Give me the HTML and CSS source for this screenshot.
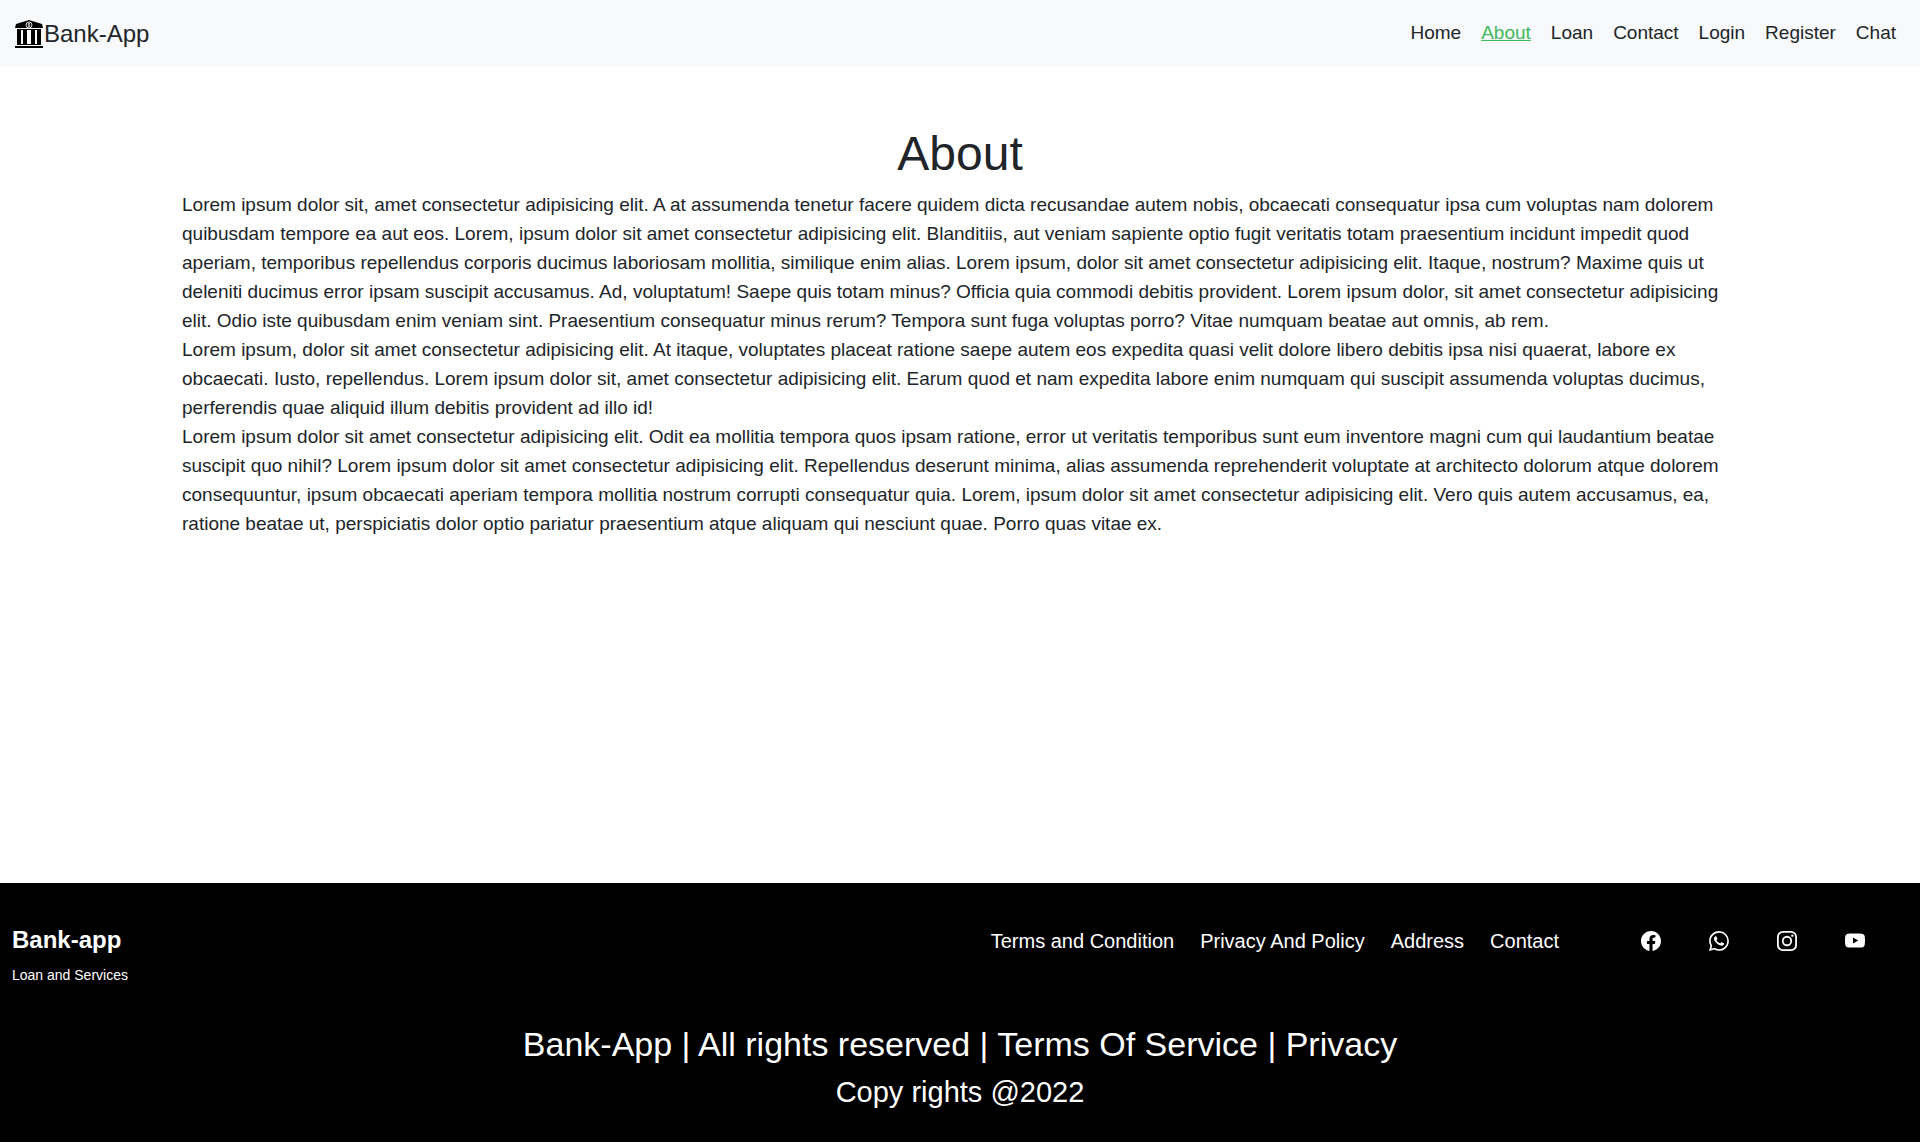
FILE: index.html
```html
<!DOCTYPE html>
<html lang="en">
<head>
<meta charset="utf-8">
<meta name="viewport" content="width=device-width, initial-scale=1">
<title>Bank-App</title>
<link rel="stylesheet" href="styles.css">
</head>
<body>
<header class="navbar">
  <a class="brand" href="#">
    <svg class="brand-icon" viewBox="0 0 28 28" aria-hidden="true">
      <path d="M14 0 27 4 28 8H0L1 4Z"/>
      <path d="M2 9h24v1H2zM2 24h24v1H2zM0 26h28v2H0z"/>
      <path d="M2 10h4v15H2zM8 10h4v15H8zM16 10h4v15h-4zM22 10h4v15h-4z"/>
      <circle cx="14" cy="5" r="3" fill="#111" stroke="#ddd"/>
      <path d="M15 3.700c-2-.8-2.600.9-1 1.300s1 2-1 1.300M14 3v4" fill="none" stroke="#ddd" stroke-width=".8"/>
    </svg>
    <span>Bank-App</span>
  </a>
  <nav class="nav-links">
    <a href="#">Home</a>
    <a class="active" href="#">About</a>
    <a href="#">Loan</a>
    <a href="#">Contact</a>
    <a href="#">Login</a>
    <a href="#">Register</a>
    <a href="#">Chat</a>
  </nav>
</header>
<main class="content">
  <h1>About</h1>
  <p>Lorem ipsum dolor sit, amet consectetur adipisicing elit. A at assumenda tenetur facere quidem dicta recusandae autem nobis, obcaecati consequatur ipsa cum voluptas nam dolorem quibusdam tempore ea aut eos. Lorem, ipsum dolor sit amet consectetur adipisicing elit. Blanditiis, aut veniam sapiente optio fugit veritatis totam praesentium incidunt impedit quod aperiam, temporibus repellendus corporis ducimus laboriosam mollitia, similique enim alias. Lorem ipsum, dolor sit amet consectetur adipisicing elit. Itaque, nostrum? Maxime quis ut deleniti ducimus error ipsam suscipit accusamus. Ad, voluptatum! Saepe quis totam minus? Officia quia commodi debitis provident. Lorem ipsum dolor, sit amet consectetur adipisicing elit. Odio iste quibusdam enim veniam sint. Praesentium consequatur minus rerum? Tempora sunt fuga voluptas porro? Vitae numquam beatae aut omnis, ab rem.</p>
  <p>Lorem ipsum, dolor sit amet consectetur adipisicing elit. At itaque, voluptates placeat ratione saepe autem eos expedita quasi velit dolore libero debitis ipsa nisi quaerat, labore ex obcaecati. Iusto, repellendus. Lorem ipsum dolor sit, amet consectetur adipisicing elit. Earum quod et nam expedita labore enim numquam qui suscipit assumenda voluptas ducimus, perferendis quae aliquid illum debitis provident ad illo id!</p>
  <p>Lorem ipsum dolor sit amet consectetur adipisicing elit. Odit ea mollitia tempora quos ipsam ratione, error ut veritatis temporibus sunt eum inventore magni cum qui laudantium beatae suscipit quo nihil? Lorem ipsum dolor sit amet consectetur adipisicing elit. Repellendus deserunt minima, alias assumenda reprehenderit voluptate at architecto dolorum atque dolorem consequuntur, ipsum obcaecati aperiam tempora mollitia nostrum corrupti consequatur quia. Lorem, ipsum dolor sit amet consectetur adipisicing elit. Vero quis autem accusamus, ea, ratione beatae ut, perspiciatis dolor optio pariatur praesentium atque aliquam qui nesciunt quae. Porro quas vitae ex.</p>
</main>
<footer class="footer">
  <div class="footer-top">
    <div class="footer-brand">
      <h2>Bank-app</h2>
      <p>Loan and Services</p>
    </div>
    <nav class="footer-links">
      <a href="#">Terms and Condition</a>
      <a href="#">Privacy And Policy</a>
      <a href="#">Address</a>
      <a href="#">Contact</a>
    </nav>
    <div class="social">
      <a href="#" aria-label="Facebook"><svg viewBox="0 0 16 16"><path d="M16 8.049c0-4.446-3.582-8.050-8-8.050C3.580 0-.002 3.603-.002 8.050c0 4.017 2.926 7.347 6.750 7.951v-5.625h-2.030V8.050H6.750V6.275c0-2.017 1.195-3.131 3.022-3.131.876 0 1.791.157 1.791.157v1.980h-1.009c-.993 0-1.303.621-1.303 1.258v1.510h2.218l-.354 2.326H9.250V16c3.824-.604 6.750-3.934 6.750-7.951z"/></svg></a>
      <a href="#" aria-label="WhatsApp"><svg viewBox="0 0 16 16"><path d="M13.601 2.326A7.854 7.854 0 0 0 7.994 0C3.627 0 .068 3.558.064 7.926c0 1.399.366 2.760 1.057 3.965L0 16l4.204-1.102a7.933 7.933 0 0 0 3.790.965h.004c4.368 0 7.926-3.558 7.930-7.930A7.898 7.898 0 0 0 13.600 2.326zM7.994 14.521a6.573 6.573 0 0 1-3.356-.920l-.240-.144-2.494.654.666-2.433-.156-.251a6.560 6.560 0 0 1-1.007-3.505c0-3.626 2.957-6.584 6.591-6.584a6.560 6.560 0 0 1 4.660 1.931 6.557 6.557 0 0 1 1.928 4.660c-.004 3.639-2.961 6.592-6.592 6.592zm3.615-4.934c-.197-.099-1.170-.578-1.353-.646-.182-.065-.315-.099-.445.099-.133.197-.513.646-.627.775-.114.133-.232.148-.430.050-.197-.1-.836-.308-1.592-.985-.590-.525-.985-1.175-1.103-1.372-.114-.198-.011-.304.088-.403.087-.088.197-.232.296-.346.100-.114.133-.198.198-.330.065-.134.034-.248-.015-.347-.050-.099-.445-1.076-.612-1.470-.160-.389-.323-.335-.445-.340-.114-.007-.247-.007-.380-.007a.729.729 0 0 0-.529.247c-.182.198-.691.677-.691 1.654 0 .977.710 1.916.810 2.049.098.133 1.394 2.132 3.383 2.992.470.205.840.326 1.129.418.475.152.904.129 1.246.080.380-.058 1.171-.480 1.338-.943.164-.464.164-.860.114-.943-.049-.084-.182-.133-.380-.232z"/></svg></a>
      <a href="#" aria-label="Instagram"><svg viewBox="0 0 16 16"><path fill-rule="evenodd" d="M4.700 0h6.600A4.700 4.700 0 0 1 16 4.700v6.600a4.700 4.700 0 0 1-4.700 4.700H4.700A4.700 4.700 0 0 1 0 11.300V4.700A4.700 4.700 0 0 1 4.700 0zm.1 1.440A3.360 3.360 0 0 0 1.440 4.800v6.400a3.360 3.360 0 0 0 3.360 3.360h6.400a3.360 3.360 0 0 0 3.360-3.360V4.800a3.360 3.360 0 0 0-3.360-3.360zM8 3.890a4.110 4.110 0 1 1 0 8.220 4.110 4.110 0 0 1 0-8.220zm0 1.440a2.670 2.670 0 1 0 0 5.340 2.670 2.670 0 0 0 0-5.340z"/><circle cx="12.270" cy="3.730" r=".96"/></svg></a>
      <a href="#" aria-label="YouTube"><svg viewBox="0 0 16 16"><path d="M8.051 1.999h.089c.822.003 4.987.033 6.110.335a2.010 2.010 0 0 1 1.415 1.420c.101.380.172.883.220 1.402l.010.104.022.260.008.104c.065.914.073 1.770.074 1.957v.075c-.001.194-.010 1.108-.082 2.060l-.008.105-.009.104c-.050.572-.124 1.140-.235 1.558a2.007 2.007 0 0 1-1.415 1.420c-1.160.312-5.569.334-6.180.335h-.142c-.309 0-1.587-.006-2.927-.052l-.170-.006-.087-.004-.171-.007-.171-.007c-1.110-.049-2.167-.128-2.654-.260a2.007 2.007 0 0 1-1.415-1.419c-.111-.417-.185-.986-.235-1.558L.090 9.820l-.008-.104A31.400 31.400 0 0 1 0 7.680v-.123c.002-.215.010-.958.064-1.778l.007-.103.003-.052.008-.104.022-.260.010-.104c.048-.519.119-1.023.220-1.402a2.007 2.007 0 0 1 1.415-1.420c.487-.130 1.544-.210 2.654-.260l.170-.007.172-.006.086-.003.171-.007A99.788 99.788 0 0 1 7.858 2h.193zM6.400 5.209v4.818l4.157-2.408L6.400 5.209z"/></svg></a>
    </div>
  </div>
  <div class="footer-bottom">
    <p class="rights">Bank-App | All rights reserved | Terms Of Service | Privacy</p>
    <p class="copy">Copy rights @2022</p>
  </div>
</footer>
</body>
</html>
```
FILE: styles.css
```css
* {
  box-sizing: border-box;
}

body {
  margin: 0;
  min-height: 100vh;
  display: flex;
  flex-direction: column;
  font-family: "Liberation Sans", Arial, sans-serif;
  font-size: 19px;
  line-height: 29px;
  color: #212529;
  background: #fff;
}

h1, h2, p {
  margin: 0;
}

a {
  color: inherit;
  text-decoration: none;
}

.navbar {
  display: flex;
  justify-content: space-between;
  align-items: center;
  padding: 16px 24px 15px 15px;
  background: #f8f9fb;
}

.brand {
  display: flex;
  align-items: center;
  gap: 1px;
  font-size: 24px;
  line-height: 36px;
}

.brand-icon {
  width: 28px;
  height: 28px;
}

.nav-links {
  display: flex;
  flex-wrap: wrap;
  gap: 20px;
  padding-bottom: 4px;
}

.nav-links .active {
  color: #40b95c;
  text-decoration: underline;
}

.content {
  flex: 1;
  width: 100%;
  max-width: 1584px;
  margin: 0 auto;
  padding: 58px 14px 48px;
}

.content h1 {
  margin-bottom: 7px;
  font-size: 48px;
  font-weight: 500;
  line-height: 58px;
  text-align: center;
}

.footer {
  padding: 39px 12px 32px;
  color: #fff;
  background: #000;
}

.footer-top {
  display: flex;
  align-items: flex-start;
}

.footer-brand {
  margin-right: auto;
}

.footer-brand h2 {
  font-size: 24px;
  line-height: 36px;
}

.footer-brand p {
  font-size: 14px;
  line-height: 34px;
}

.footer-links {
  display: flex;
  flex-wrap: wrap;
  gap: 26px;
  font-size: 20px;
  line-height: 38px;
}

.social {
  display: flex;
  gap: 48px;
  padding: 9px 43px 0 82px;
}

.social a,
.social svg {
  display: block;
  width: 20px;
  height: 20px;
}

.social svg {
  fill: currentColor;
}

.footer-bottom {
  padding-top: 32px;
  text-align: center;
}

.rights {
  font-size: 34px;
  line-height: 40px;
}

.copy {
  margin-top: 11px;
  font-size: 29px;
  line-height: 35px;
}
```
